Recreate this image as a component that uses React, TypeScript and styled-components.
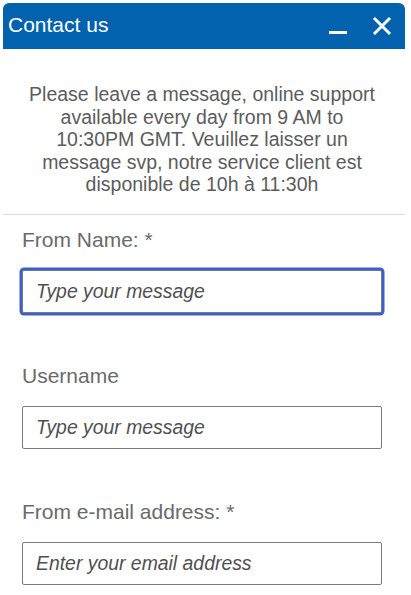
import React from 'react';
import styled, { createGlobalStyle } from 'styled-components';

const GlobalStyle = createGlobalStyle`
  html, body {
    margin: 0;
    padding: 0;
    background: #ffffff;
  }
  body {
    font-family: "Liberation Sans", Arial, sans-serif;
  }
`;

const Widget = styled.div`
  margin: 3px 6px 0 3px;
  background: #ffffff;
`;

const Header = styled.div`
  height: 46px;
  background: #0362ae;
  border-radius: 6px 6px 0 0;
  display: flex;
  align-items: center;
  padding: 0 12px 0 5px;
  color: #ffffff;
`;

const Title = styled.h1`
  margin: 0;
  font-size: 21px;
  font-weight: 400;
  flex: 1;
  padding-bottom: 3px;
`;

const HeaderButton = styled.button`
  background: none;
  border: 0;
  padding: 0;
  margin-left: ${props => props.$gap || 0}px;
  width: 22px;
  height: 22px;
  display: flex;
  align-items: center;
  justify-content: center;
  cursor: pointer;
  color: #ffffff;
`;

const Intro = styled.p`
  margin: 0 0 0 22px;
  padding: 34px 0 18px;
  width: 354px;
  text-align: center;
  font-size: 19.5px;
  line-height: 22.5px;
  color: #5c5c5c;
`;

const Divider = styled.hr`
  margin: 0;
  border: 0;
  border-top: 1px solid #dcdcdc;
`;

const Form = styled.form`
  padding: 13px 0 0 19px;
  display: flex;
  flex-direction: column;
  gap: 51px;
`;

const Field = styled.div`
  display: flex;
  flex-direction: column;
  gap: 18px;
`;

const Label = styled.label`
  font-size: 21px;
  line-height: 24px;
  color: #6a6a6a;
`;

const Input = styled.input`
  box-sizing: border-box;
  width: 360px;
  height: 43px;
  padding: 0 13px;
  border: 1px solid #7a7a7a;
  border-radius: 2px;
  font-family: inherit;
  font-size: 19.4px;
  color: #333;
  outline: none;
  box-shadow: ${props => (props.$focused ? '0 0 0 2.5px #3a5fd0' : 'none')};

  &::placeholder {
    font-style: italic;
    color: #505050;
  }
`;

const MinimizeIcon = () => (
  <svg width="20" height="20" viewBox="0 0 20 20">
    <rect x="1" y="15" width="18" height="3" fill="currentColor" />
  </svg>
);

const CloseIcon = () => (
  <svg width="22" height="22" viewBox="0 0 22 22">
    <path d="M3 3 L19 19 M19 3 L3 19" stroke="currentColor" strokeWidth="3" fill="none" />
  </svg>
);

export default function App() {
  return (
    <>
      <GlobalStyle />
      <Widget>
        <Header>
          <Title>Contact us</Title>
          <HeaderButton aria-label="Minimize">
            <MinimizeIcon />
          </HeaderButton>
          <HeaderButton aria-label="Close" $gap={22}>
            <CloseIcon />
          </HeaderButton>
        </Header>
        <Intro>
          Please leave a message, online support available every day from 9 AM to 10:30PM GMT.
          Veuillez laisser un message svp, notre service client est disponible de 10h à 11:30h
        </Intro>
        <Divider />
        <Form onSubmit={e => e.preventDefault()}>
          <Field>
            <Label htmlFor="fromName">From Name: *</Label>
            <Input id="fromName" placeholder="Type your message" $focused autoFocus />
          </Field>
          <Field>
            <Label htmlFor="username">Username</Label>
            <Input id="username" placeholder="Type your message" />
          </Field>
          <Field>
            <Label htmlFor="email">From e-mail address: *</Label>
            <Input id="email" type="email" placeholder="Enter your email address" />
          </Field>
        </Form>
      </Widget>
    </>
  );
}
